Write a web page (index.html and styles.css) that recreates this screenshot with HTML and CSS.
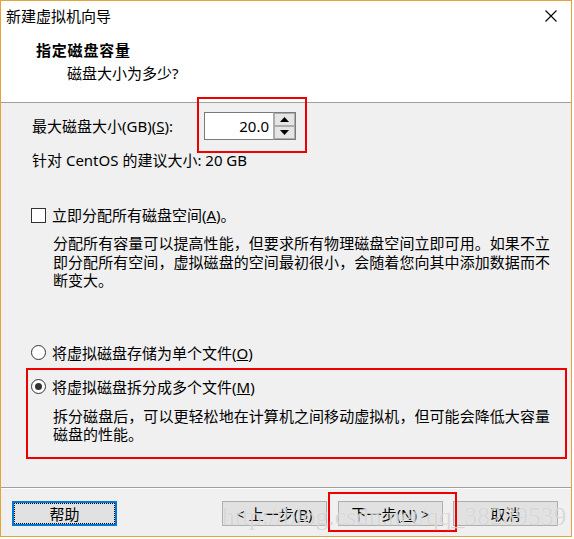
FILE: index.html
```html
<!DOCTYPE html>
<html lang="zh-CN">
<head>
<meta charset="utf-8">
<title>新建虚拟机向导</title>
<link rel="stylesheet" href="styles.css">
</head>
<body>
<div class="window">
  <div class="header">
    <div class="titlebar">
      <span class="title">新建虚拟机向导</span>
      <svg class="close" width="12" height="12" viewBox="0 0 12 12"><path d="M0.5 0.5 L11.5 11.5 M11.5 0.5 L0.5 11.5" stroke="#000" stroke-width="1.1" fill="none"/></svg>
    </div>
    <div class="heading">指定磁盘容量</div>
    <div class="subheading">磁盘大小为多少?</div>
  </div>

  <div class="main">
    <div class="size-row">
      <span class="size-label">最大磁盘大小(GB)(<u>S</u>):</span>
      <div class="spin annot annot-spin">
        <div class="spin-input">20.0</div>
        <div class="spin-btns">
          <div class="spin-btn"><svg width="9" height="5" viewBox="0 0 9 5"><polygon points="0,5 9,5 4.5,0" fill="#000"/></svg></div>
          <div class="spin-btn"><svg width="9" height="5" viewBox="0 0 9 5"><polygon points="0,0 9,0 4.5,5" fill="#000"/></svg></div>
        </div>
      </div>
    </div>
    <div class="hint">针对 CentOS 的建议大小: 20 GB</div>

    <div class="option-row check-row">
      <span class="checkbox"></span>
      <span>立即分配所有磁盘空间(<u>A</u>)。</span>
    </div>
    <p class="desc desc-alloc"><span class="desc-line">分配所有容量可以提高性能，但要求所有物理磁盘空间立即可用。如果不立</span><span class="desc-line">即分配所有空间，虚拟磁盘的空间最初很小，会随着您向其中添加数据而不</span>断变大。</p>

    <div class="option-row radio-single">
      <span class="radio"></span>
      <span>将虚拟磁盘存储为单个文件(<u>O</u>)</span>
    </div>
    <div class="split-group annot annot-split">
      <div class="option-row">
        <span class="radio checked"></span>
        <span>将虚拟磁盘拆分成多个文件(<u>M</u>)</span>
      </div>
      <p class="desc desc-split"><span class="desc-line">拆分磁盘后，可以更轻松地在计算机之间移动虚拟机，但可能会降低大容量</span>磁盘的性能。</p>
    </div>
  </div>

  <div class="footer">
    <button class="btn btn-help">帮助</button>
    <div class="nav-buttons">
      <button class="btn">&lt; 上一步(<u>B</u>)</button>
      <button class="btn annot annot-next">下一步(<u>N</u>) &gt;</button>
      <button class="btn btn-cancel">取消</button>
    </div>
    <div class="watermark">http://blog.csdn.net/qq_38289539</div>
  </div>
</div>
</body>
</html>
```

FILE: styles.css
```css
html, body {
  margin: 0;
  padding: 0;
  background: #ffffff;
}

body {
  font-family: "Noto Sans", "Noto Sans CJK SC", sans-serif;
  font-size: 15px;
  color: #000;
}

.window {
  width: 570px;
  height: 535px;
  border: 1px solid #e6a23c;
  display: flex;
  flex-direction: column;
  background: #f0f0f0;
  position: relative;
}

/* ---------- header ---------- */
.header {
  background: #ffffff;
  border-bottom: 1px solid #a0a0a0;
  height: 101px;
  flex: none;
}

.titlebar {
  height: 30px;
  display: flex;
  align-items: center;
  justify-content: space-between;
  padding: 0 14px 0 5px;
}

.title {
  line-height: 20px;
}

.close {
  display: block;
}

.heading {
  margin-top: 9px;
  padding-left: 35px;
  line-height: 20px;
  font-weight: bold;
  letter-spacing: 0.8px;
}

.subheading {
  margin-top: 3px;
  padding-left: 66px;
  line-height: 20px;
}

/* ---------- main ---------- */
.main {
  flex: 1;
  padding: 9px 20px 0 30px;
}

.size-row {
  display: flex;
  align-items: center;
  height: 28px;
}

.size-label {
  width: 172px;
  padding-left: 1px;
  line-height: 20px;
}

.spin {
  display: flex;
  height: 28px;
  position: relative;
}

.spin-input {
  width: 64px;
  height: 26px;
  border: 1px solid #7a7a7a;
  border-right: none;
  background: #fff;
  text-align: right;
  padding-right: 4px;
  line-height: 26px;
}

.spin-btns {
  width: 21px;
  display: flex;
  flex-direction: column;
  border: 1px solid #7a7a7a;
  border-left: 1px solid #adadad;
  background: #fff;
}

.spin-btn {
  flex: 1;
  display: flex;
  align-items: center;
  justify-content: center;
  background: #e5e5e5;
  border: 1px solid #adadad;
}

.spin-btn svg {
  display: block;
}

.hint {
  margin-top: 10px;
  padding-left: 1px;
  line-height: 20px;
}

.option-row {
  display: flex;
  align-items: center;
  height: 20px;
  line-height: 20px;
}

.check-row {
  margin-top: 35px;
}

.checkbox {
  width: 13px;
  height: 13px;
  border: 1px solid #333;
  background: #fff;
  margin-right: 6px;
  flex: none;
}

.radio {
  width: 13px;
  height: 13px;
  border: 1px solid #333;
  border-radius: 50%;
  background: #fff;
  margin-right: 6px;
  flex: none;
  display: flex;
  align-items: center;
  justify-content: center;
}

.radio.checked::before {
  content: "";
  width: 7px;
  height: 7px;
  border-radius: 50%;
  background: #333;
}

.desc {
  margin: 0 0 0 22px;
  width: 497px;
  line-height: 18.5px;
}

.desc-line {
  display: block;
  white-space: nowrap;
  text-align: justify;
  text-align-last: justify;
}

.desc-alloc {
  margin-top: 9px;
}

.radio-single {
  margin-top: 53px;
}

.split-group {
  margin-top: 14px;
  position: relative;
}

.desc-split {
  margin-top: 10px;
}

/* ---------- annotation boxes (overlays) ---------- */
.annot {
  position: relative;
}

.annot::after {
  content: "";
  position: absolute;
  border: 2px solid #ee0000;
  pointer-events: none;
}

.annot-spin::after {
  left: -7px;
  right: -11px;
  top: -15px;
  bottom: -13px;
}

.annot-split::after {
  left: -5px;
  right: -16px;
  top: -9px;
  bottom: -15px;
}

.annot-next::after {
  left: -11px;
  right: -15px;
  top: -10px;
  bottom: -7px;
}

/* ---------- footer ---------- */
.footer {
  flex: none;
  height: 35px;
  border-top: 1px solid #a0a0a0;
  box-shadow: inset 0 1px 0 #ffffff;
  padding: 13px 13px 0 11px;
  display: flex;
  align-items: flex-start;
  justify-content: space-between;
  position: relative;
}

.nav-buttons {
  display: flex;
  gap: 11px;
}

.btn {
  width: 105px;
  height: 25px;
  padding: 0;
  margin: 0;
  background: #e1e1e1;
  border: 1px solid #adadad;
  font-family: "Noto Sans", "Noto Sans CJK SC", sans-serif;
  font-size: 15px;
  line-height: 20px;
  color: #000;
}

.btn-cancel {
  margin-left: -1px;
}

.btn-help {
  border: 2px solid #0078d7;
  outline: 1px dotted #000;
  outline-offset: -3px;
}

.watermark {
  position: absolute;
  left: 221px;
  top: 14px;
  font-family: "Liberation Serif", serif;
  font-size: 25.5px;
  line-height: 30px;
  color: rgba(160, 160, 160, 0.4);
  text-shadow: 0 0 1px rgba(255, 255, 255, 0.9);
  white-space: nowrap;
  pointer-events: none;
}
```
